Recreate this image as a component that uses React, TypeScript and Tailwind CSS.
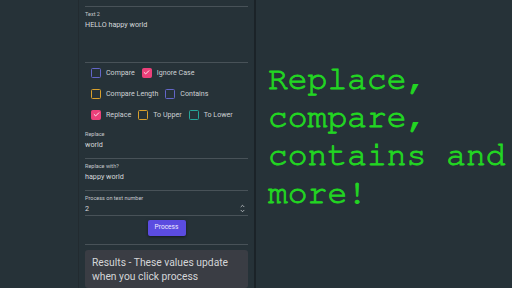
import { ChevronUp, ChevronDown, Check } from "lucide-react"

type Box = { label: string; color: string; checked?: boolean }

const rows: Box[][] = [
  [
    { label: "Compare", color: "border-[#6366c8]" },
    { label: "Ignore Case", color: "border-[#ec407a] bg-[#ec407a]", checked: true },
  ],
  [
    { label: "Compare Length", color: "border-[#d9a02c]" },
    { label: "Contains", color: "border-[#6366c8]" },
  ],
  [
    { label: "Replace", color: "border-[#ec407a] bg-[#ec407a]", checked: true },
    { label: "To Upper", color: "border-[#d9a02c]" },
    { label: "To Lower", color: "border-[#26a69a]" },
  ],
]

function Divider() {
  return <div className="h-px bg-[#485258]" />
}

function Field({ label, value }: { label: string; value: string }) {
  return (
    <div className="flex flex-col">
      <span className="text-[5.5px] leading-[8px] text-[#c4c8cb]">{label}</span>
      <span className="mt-[2px] text-[7.2px] leading-[10px] text-[#d6d9db]">{value}</span>
    </div>
  )
}

export default function App() {
  return (
    <div className="flex w-[512px] h-[288px] overflow-hidden bg-[#263238] font-['Roboto',sans-serif]">
      <div className="w-[78px] shrink-0" />
      <div className="w-[178px] shrink-0 flex flex-col border-l border-[#222b30] border-r-2 border-r-[#1b2328] px-[6px] pt-[6px]">
        <Divider />
        <div className="h-[56px] pt-[3px]">
          <Field label="Text 2" value="HELLO happy world" />
        </div>
        <Divider />
        <div className="flex flex-col gap-[11px] pt-[5px] pl-[6px]">
          {rows.map((row, i) => (
            <div key={i} className="flex items-center gap-[7px] h-[10px]">
              {row.map((b) => (
                <div key={b.label} className="flex items-center gap-[5px]">
                  <div className={`w-[10px] h-[10px] rounded-[1.5px] border-[1.5px] ${b.color} flex items-center justify-center`}>
                    {b.checked && <Check className="w-[7px] h-[7px] text-white" strokeWidth={3} />}
                  </div>
                  <span className="text-[7.1px] leading-[10px] text-[#cdd1d4]">{b.label}</span>
                </div>
              ))}
            </div>
          ))}
        </div>
        <div className="h-[39px] pt-[10px]">
          <Field label="Replace" value="world" />
        </div>
        <Divider />
        <div className="h-[32px] pt-[3px]">
          <Field label="Replace with?" value="happy world" />
        </div>
        <Divider />
        <div className="h-[24px] pt-[3px] flex justify-between">
          <Field label="Process on text number" value="2" />
          <div className="flex flex-col items-center pt-[9px] pr-[2px] text-[#cfd3d6]">
            <ChevronUp className="w-[7px] h-[6px]" strokeWidth={3} />
            <ChevronDown className="w-[7px] h-[6px] -mt-[1px]" strokeWidth={3} />
          </div>
        </div>
        <Divider />
        <div className="h-[29px] flex justify-center pt-[4px]">
          <button className="w-[38px] h-[16px] rounded-[2px] bg-[#5b4ce0] text-[6.6px] text-[#eeeaff] shadow-[0_1px_3px_rgba(0,0,0,0.5)]">
            Process
          </button>
        </div>
        <Divider />
        <div className="mt-[5px] rounded-[3px] bg-[#3a3d44] px-[7px] pt-[6px] pb-[4px] text-[10.3px] leading-[14px] text-[#d4d6d8]">
          Results - These values update when you click process
        </div>
      </div>
      <div className="flex-1 pl-[12px] pt-[61px] font-['Nimbus_Mono_PS','FreeMono','Liberation_Mono',monospace] text-[33px] leading-[38px] text-[#22d622] [-webkit-text-stroke:0.9px_#22d622]">
        Replace,
        <br />
        compare,
        <br />
        contains and
        <br />
        more!
      </div>
    </div>
  )
}
